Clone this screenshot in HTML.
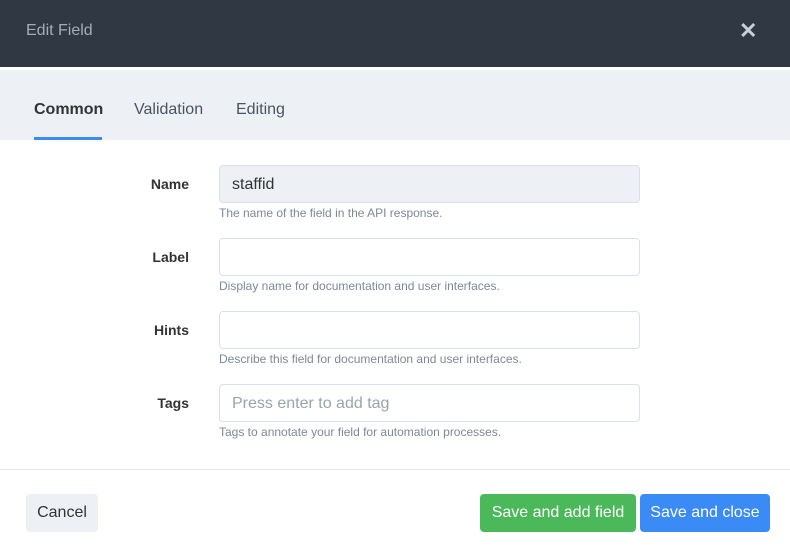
<!DOCTYPE html><html><head><style>
body{margin:0;width:790px;height:552px;font-family:"Liberation Sans",sans-serif;background:#fff;position:relative;overflow:hidden}
.a{position:absolute}
.hdr{left:0;top:0;width:790px;height:67px;background:#2f3843}
.tabs{left:0;top:70px;width:790px;height:70px;background:#edf1f5}
.tab{top:101px;font-size:16px;color:#4a5360}
.lbl{font-size:14px;font-weight:bold;color:#333;width:189px;left:0;text-align:right}
.inp{left:219px;width:419px;height:36px;border:1px solid #d9e0e8;border-radius:4px;background:#fff;font-size:16px;color:#333;box-sizing:content-box}
.hint{left:219px;font-size:12px;color:#7d8897}
.btn{top:494px;height:38px;border-radius:4px;font-size:16px;line-height:38px;text-align:center}
</style></head><body>
<div class="a hdr"></div>
<div class="a" style="left:26px;top:22px;font-size:16px;color:#a3acb7">Edit Field</div>
<div class="a" style="left:739px;top:18px;font-size:22px;color:#c8cfd7;font-weight:bold">✕</div>
<div class="a tabs"></div>
<div class="a tab" style="left:34px;font-weight:bold;color:#333">Common</div>
<div class="a" style="left:34px;top:137px;width:68px;height:3px;background:#3a8bf5"></div>
<div class="a tab" style="left:134px">Validation</div>
<div class="a tab" style="left:236px">Editing</div>

<div class="a lbl" style="top:176px">Name</div>
<div class="a inp" style="top:165px;background:#edf1f5"><span style="position:absolute;left:12px;top:10px">staffid</span></div>
<div class="a hint" style="top:206px">The name of the field in the API response.</div>

<div class="a lbl" style="top:249px">Label</div>
<div class="a inp" style="top:238px"></div>
<div class="a hint" style="top:279px">Display name for documentation and user interfaces.</div>

<div class="a lbl" style="top:322px">Hints</div>
<div class="a inp" style="top:311px"></div>
<div class="a hint" style="top:352px">Describe this field for documentation and user interfaces.</div>

<div class="a lbl" style="top:395px">Tags</div>
<div class="a inp" style="top:384px"><span style="position:absolute;left:12px;top:10px;color:#9aa3ad">Press enter to add tag</span></div>
<div class="a hint" style="top:425px">Tags to annotate your field for automation processes.</div>

<div class="a" style="left:0;top:469px;width:790px;height:1px;background:#e3e7ec"></div>
<div class="a btn" style="left:26px;width:72px;background:#edf1f5;color:#333">Cancel</div>
<div class="a btn" style="left:480px;width:156px;background:#4bb85a;color:#fff">Save and add field</div>
<div class="a btn" style="left:640px;width:130px;background:#3a8bf5;color:#fff">Save and close</div>
</body></html>
